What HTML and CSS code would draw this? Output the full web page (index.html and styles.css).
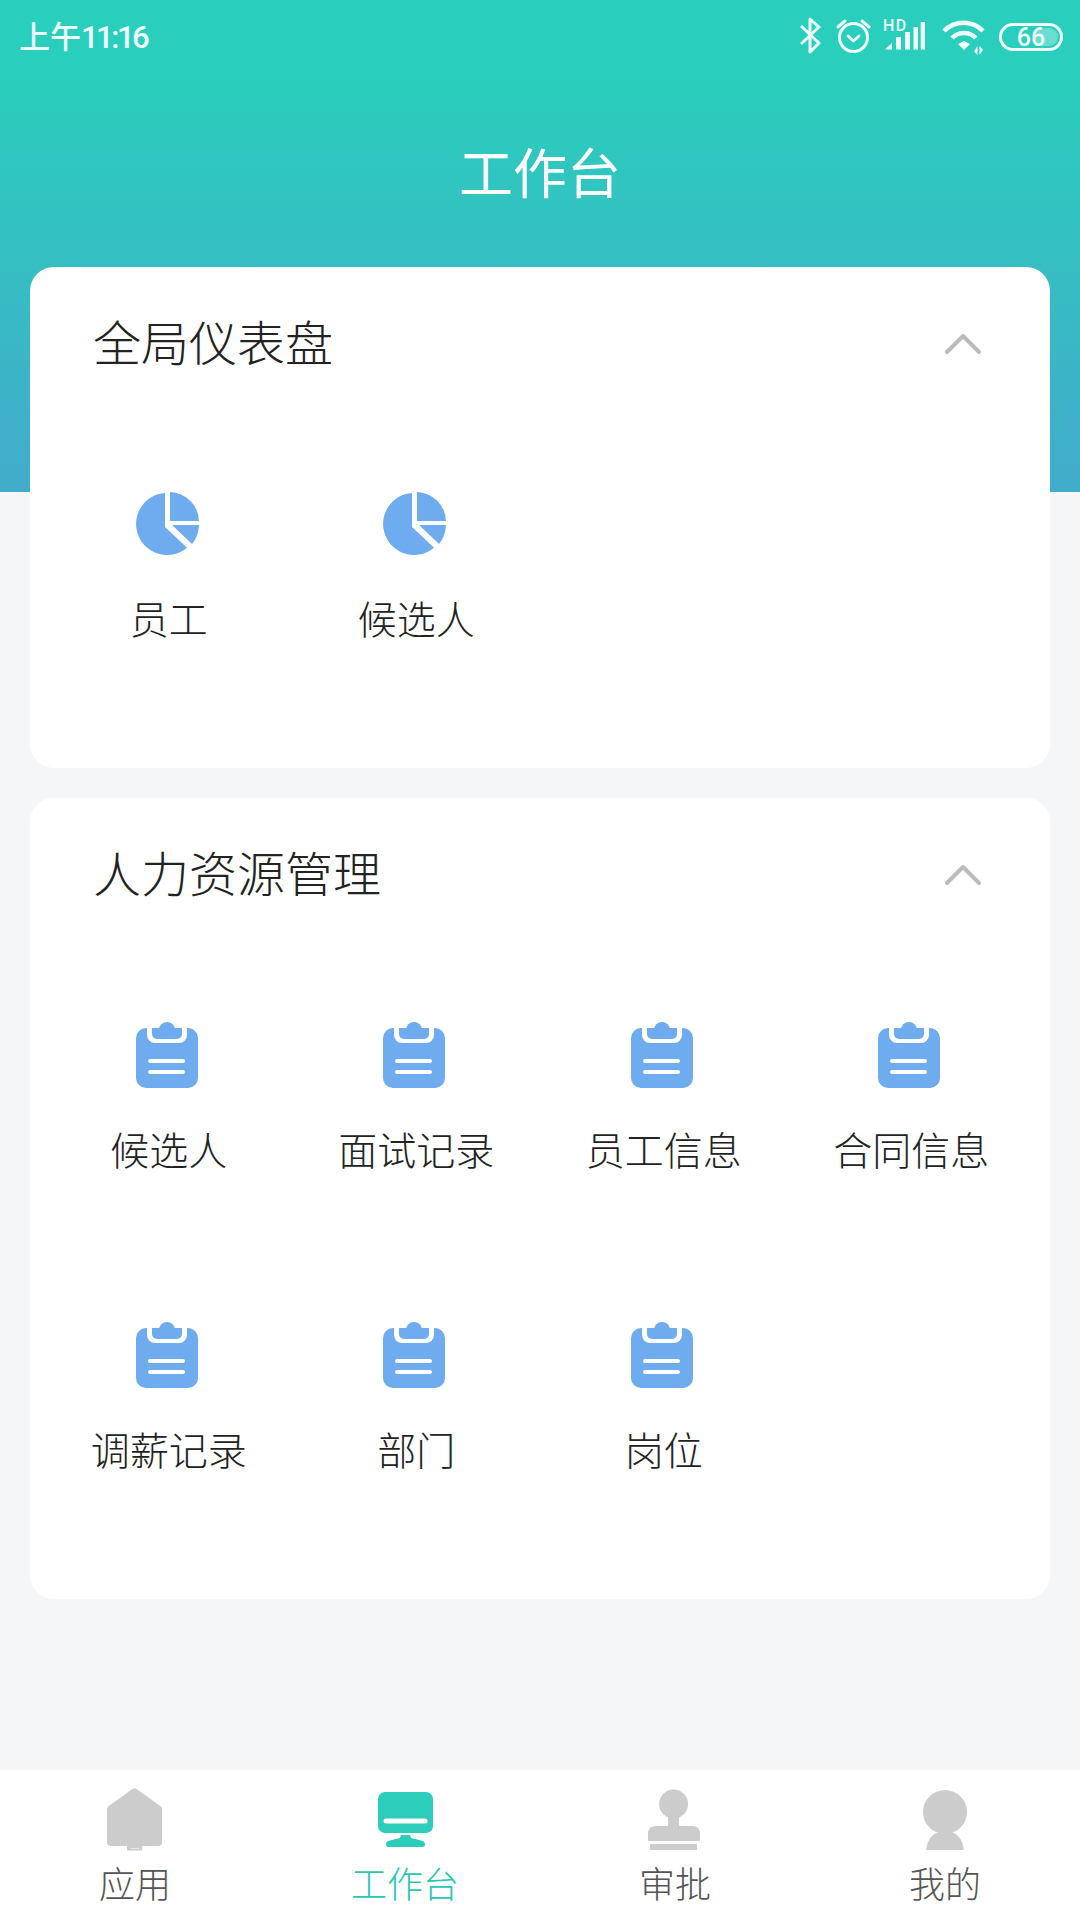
FILE: index.html
```html
<!DOCTYPE html>
<html lang="zh-CN">
<head>
<meta charset="utf-8">
<title>工作台</title>
<link rel="stylesheet" href="styles.css">
</head>
<body>
<svg class="defs" width="0" height="0" aria-hidden="true">
  <symbol id="pie" viewBox="-1 -2 68 70">
    <path fill="#6EABEF" d="M29 1A31 31 0 1 0 51 55.700L29 35Z"/>
    <path fill="#6EABEF" d="M34 0A30 30 0 0 1 63 29H34Z"/>
    <path fill="#6EABEF" d="M36 33H63A31 31 0 0 1 56 52Z"/>
  </symbol>
  <symbol id="clip" viewBox="-1 1 68 70">
    <rect x="0" y="8" width="62" height="60" rx="10" fill="#6EABEF"/>
    <path d="M11 6V15A8 8 0 0 0 19 23H43A8 8 0 0 0 51 15V6Z" fill="#fff"/>
    <circle cx="31" cy="10" r="8" fill="#6EABEF"/>
    <path d="M16 8H46V14A5 5 0 0 1 41 19H21A5 5 0 0 1 16 14Z" fill="#6EABEF"/>
    <path d="M14 41H47M14 52H47" stroke="#fff" stroke-width="4" stroke-linecap="round"/>
  </symbol>
  <symbol id="chevron" viewBox="0 0 40 24">
    <path d="M4 21L20 5L36 21" fill="none" stroke="#BBB" stroke-width="4" stroke-linecap="round" stroke-linejoin="round"/>
  </symbol>
</svg>
<div class="page">
  <div class="status">
    <div class="time">上午<span class="digits">11:16</span></div>
    <div class="status-icons">
      <svg class="si si-bt" viewBox="0 0 36 40"><path d="M1 9L19 26L10 35V2L19 10L1 27" fill="none" stroke="#EFFFFC" stroke-width="3" stroke-linejoin="round"/></svg>
      <svg class="si si-alarm" viewBox="0 0 47 40">
        <circle cx="17.500" cy="20.500" r="14" fill="none" stroke="#EFFFFC" stroke-width="3"/>
        <path d="M12 19L17.500 24L23 19" fill="none" stroke="#EFFFFC" stroke-width="3" stroke-linecap="round" stroke-linejoin="round"/>
        <path d="M2 10L9 4M26 4L33 10" fill="none" stroke="#EFFFFC" stroke-width="3" stroke-linecap="round"/>
      </svg>
      <svg class="si si-signal" viewBox="0 0 59 40">
        <text class="hd" x="0" y="14">HD</text>
        <path fill="#EFFFFC" d="M2 32.500L9 26V32.500Z"/>
        <rect x="13" y="20" width="5" height="12.500" fill="#EFFFFC"/>
        <rect x="22" y="15" width="5" height="17.500" fill="#EFFFFC"/>
        <rect x="30.500" y="10" width="4.500" height="22.500" fill="#EFFFFC"/>
        <rect x="37.700" y="5" width="4.300" height="27.500" fill="#EFFFFC"/>
      </svg>
      <svg class="si si-wifi" viewBox="0 0 57 40">
        <path d="M2 14A27 27 0 0 1 41 14M10 21A17 17 0 0 1 34 21" fill="none" stroke="#EFFFFC" stroke-width="4.500"/>
        <path d="M16 27L22 24L28 27L22 33Z" fill="#EFFFFC"/>
        <path d="M35.500 38V29L32 34.500ZM37.500 29V38L41 33Z" fill="#EFFFFC"/>
      </svg>
      <div class="battery"><span class="battery-fill"></span><span class="battery-num">66</span></div>
    </div>
  </div>
  <div class="title-bar"><h1 class="title">工作台</h1></div>
  <main class="cards">
    <section class="card">
      <header class="card-head">
        <h2 class="card-title">全局仪表盘</h2>
        <svg class="chevron"><use href="#chevron"/></svg>
      </header>
      <div class="grid">
        <a class="cell"><svg class="cell-icon"><use href="#pie"/></svg><span class="cell-label">员工</span></a>
        <a class="cell"><svg class="cell-icon"><use href="#pie"/></svg><span class="cell-label">候选人</span></a>
      </div>
    </section>
    <section class="card">
      <header class="card-head">
        <h2 class="card-title">人力资源管理</h2>
        <svg class="chevron"><use href="#chevron"/></svg>
      </header>
      <div class="grid">
        <a class="cell"><svg class="cell-icon"><use href="#clip"/></svg><span class="cell-label">候选人</span></a>
        <a class="cell"><svg class="cell-icon"><use href="#clip"/></svg><span class="cell-label">面试记录</span></a>
        <a class="cell"><svg class="cell-icon"><use href="#clip"/></svg><span class="cell-label">员工信息</span></a>
        <a class="cell"><svg class="cell-icon"><use href="#clip"/></svg><span class="cell-label">合同信息</span></a>
        <a class="cell"><svg class="cell-icon"><use href="#clip"/></svg><span class="cell-label">调薪记录</span></a>
        <a class="cell"><svg class="cell-icon"><use href="#clip"/></svg><span class="cell-label">部门</span></a>
        <a class="cell"><svg class="cell-icon"><use href="#clip"/></svg><span class="cell-label">岗位</span></a>
      </div>
    </section>
  </main>
  <nav class="tabs">
    <a class="tab">
      <svg class="tab-icon" viewBox="0 1 64 68"><path fill="#CCC" d="M29.500 4Q31.500 2.500 33.500 4L58 21.500Q59 22.500 59 24V57Q59 61 55 61H8Q4 61 4 57V24Q4 22.500 5 21.500Z"/><path fill="#CCC" d="M24 61H39V65.500H24Z"/><path stroke="#E6E6E6" stroke-width="1" d="M27 63.500H36"/></svg>
      <span class="tab-label">应用</span>
    </a>
    <a class="tab tab-active">
      <svg class="tab-icon" viewBox="0 1 64 68"><rect x="5" y="7" width="55" height="41" rx="7" fill="#2DCDBB"/><path d="M13 36H52" stroke="#fff" stroke-width="5" stroke-linecap="round"/><path fill="#2DCDBB" d="M28 50H37L38 53L50 56Q52 57 52 59.500Q52 62 49 62H16Q13 62 13 59.500Q13 57 15 56L27 53Z"/></svg>
      <span class="tab-label">工作台</span>
    </a>
    <a class="tab">
      <svg class="tab-icon" viewBox="0 1 64 68"><circle cx="30.600" cy="19" r="14.500" fill="#CCC"/><path fill="#CCC" d="M25 28H36V41H49Q57 41 57 49V56H5V49Q5 41 13 41H25Z"/><rect x="7" y="59" width="47" height="6" fill="#CCC"/></svg>
      <span class="tab-label">审批</span>
    </a>
    <a class="tab">
      <svg class="tab-icon" viewBox="0 1 64 68"><circle cx="32" cy="27" r="22" fill="#CCC"/><path fill="#CCC" d="M13 65Q15 50 26 47Q32 50 38 47Q49 50 51 65Z"/></svg>
      <span class="tab-label">我的</span>
    </a>
  </nav>
</div>
</body>
</html>
```

FILE: styles.css
```css
* { box-sizing: border-box; }
html, body { margin: 0; padding: 0; }
body {
  font-family: "Noto Sans CJK SC", "Noto Sans", sans-serif;
  color: #333;
}
.defs { display: block; height: 0; }
.page {
  width: 1080px;
  height: 1920px;
  display: flex;
  flex-direction: column;
  background-color: #F5F6F8;
  background-image: linear-gradient(180deg, #2ACEBC 0%, #2ACEBC 15%, #42ABCB 100%);
  background-size: 100% 492px;
  background-repeat: no-repeat;
  overflow: hidden;
}
.status {
  height: 74px;
  display: flex;
  justify-content: space-between;
  align-items: center;
  padding: 0 17px 0 19px;
  color: #EFFFFC;
}
.time {
  font-size: 31px;
  font-weight: 500;
  line-height: 1;
  margin-bottom: 2px;
}
.digits {
  font-family: Roboto, sans-serif;
  letter-spacing: -2.500px;
}
.status-icons { display: flex; align-items: center; }
.si { display: block; height: 40px; }
.si-bt { width: 36px; }
.si-alarm { width: 47px; }
.si-signal { width: 59px; }
.si-wifi { width: 57px; }
.hd {
  font-family: Roboto, sans-serif;
  font-size: 16px;
  font-weight: 500;
  letter-spacing: 1.500px;
  fill: #EFFFFC;
}
.battery {
  position: relative;
  width: 64px;
  height: 28px;
  border: 3px solid #EFFFFC;
  border-radius: 14px;
  display: flex;
  align-items: center;
  justify-content: center;
  overflow: hidden;
}
.battery-fill {
  position: absolute;
  right: 2px;
  top: 2px;
  bottom: 2px;
  width: 22px;
  background: rgba(255, 255, 255, 0.3);
  border-radius: 0 9px 9px 0;
}
.battery-num {
  position: relative;
  font-family: Roboto, sans-serif;
  font-size: 25px;
  font-weight: 500;
  line-height: 1;
  color: #EFFFFC;
}
.title-bar {
  height: 193px;
  display: flex;
  align-items: center;
  justify-content: center;
}
.title {
  margin: 0;
  font-size: 54px;
  font-weight: 400;
  line-height: 1;
  color: #fff;
}
.cards {
  flex: 1;
  padding: 0 30px;
  display: flex;
  flex-direction: column;
  gap: 30px;
}
.card {
  background: #fff;
  border-radius: 24px;
  padding: 0 15px 49px;
}
.card-head {
  height: 152px;
  padding: 0 52px 6px 48px;
  display: flex;
  align-items: center;
  justify-content: space-between;
}
.card-title {
  margin: 0;
  font-size: 48px;
  font-weight: 300;
  line-height: 1;
  color: #222;
}
.chevron { width: 40px; height: 24px; display: block; margin-bottom: -6px; }
.grid {
  display: grid;
  grid-template-columns: repeat(4, 247.5px);
  grid-auto-rows: 300px;
}
.cell {
  display: flex;
  flex-direction: column;
  align-items: center;
  padding-top: 71px;
}
.cell-icon { width: 68px; height: 70px; display: block; }
.cell-label {
  margin-top: 33px;
  font-size: 39px;
  font-weight: 300;
  line-height: 48px;
  color: #222;
}
.tabs {
  height: 150px;
  background: #fff;
  display: grid;
  grid-template-columns: repeat(4, 270px);
}
.tab {
  display: flex;
  flex-direction: column;
  align-items: center;
  padding-top: 16px;
}
.tab-icon { width: 64px; height: 68px; display: block; }
.tab-label {
  height: 66px;
  font-size: 36px;
  font-weight: 300;
  line-height: 57px;
  color: #555;
}
.tab-active .tab-label { color: #2AC6B4; }
```
